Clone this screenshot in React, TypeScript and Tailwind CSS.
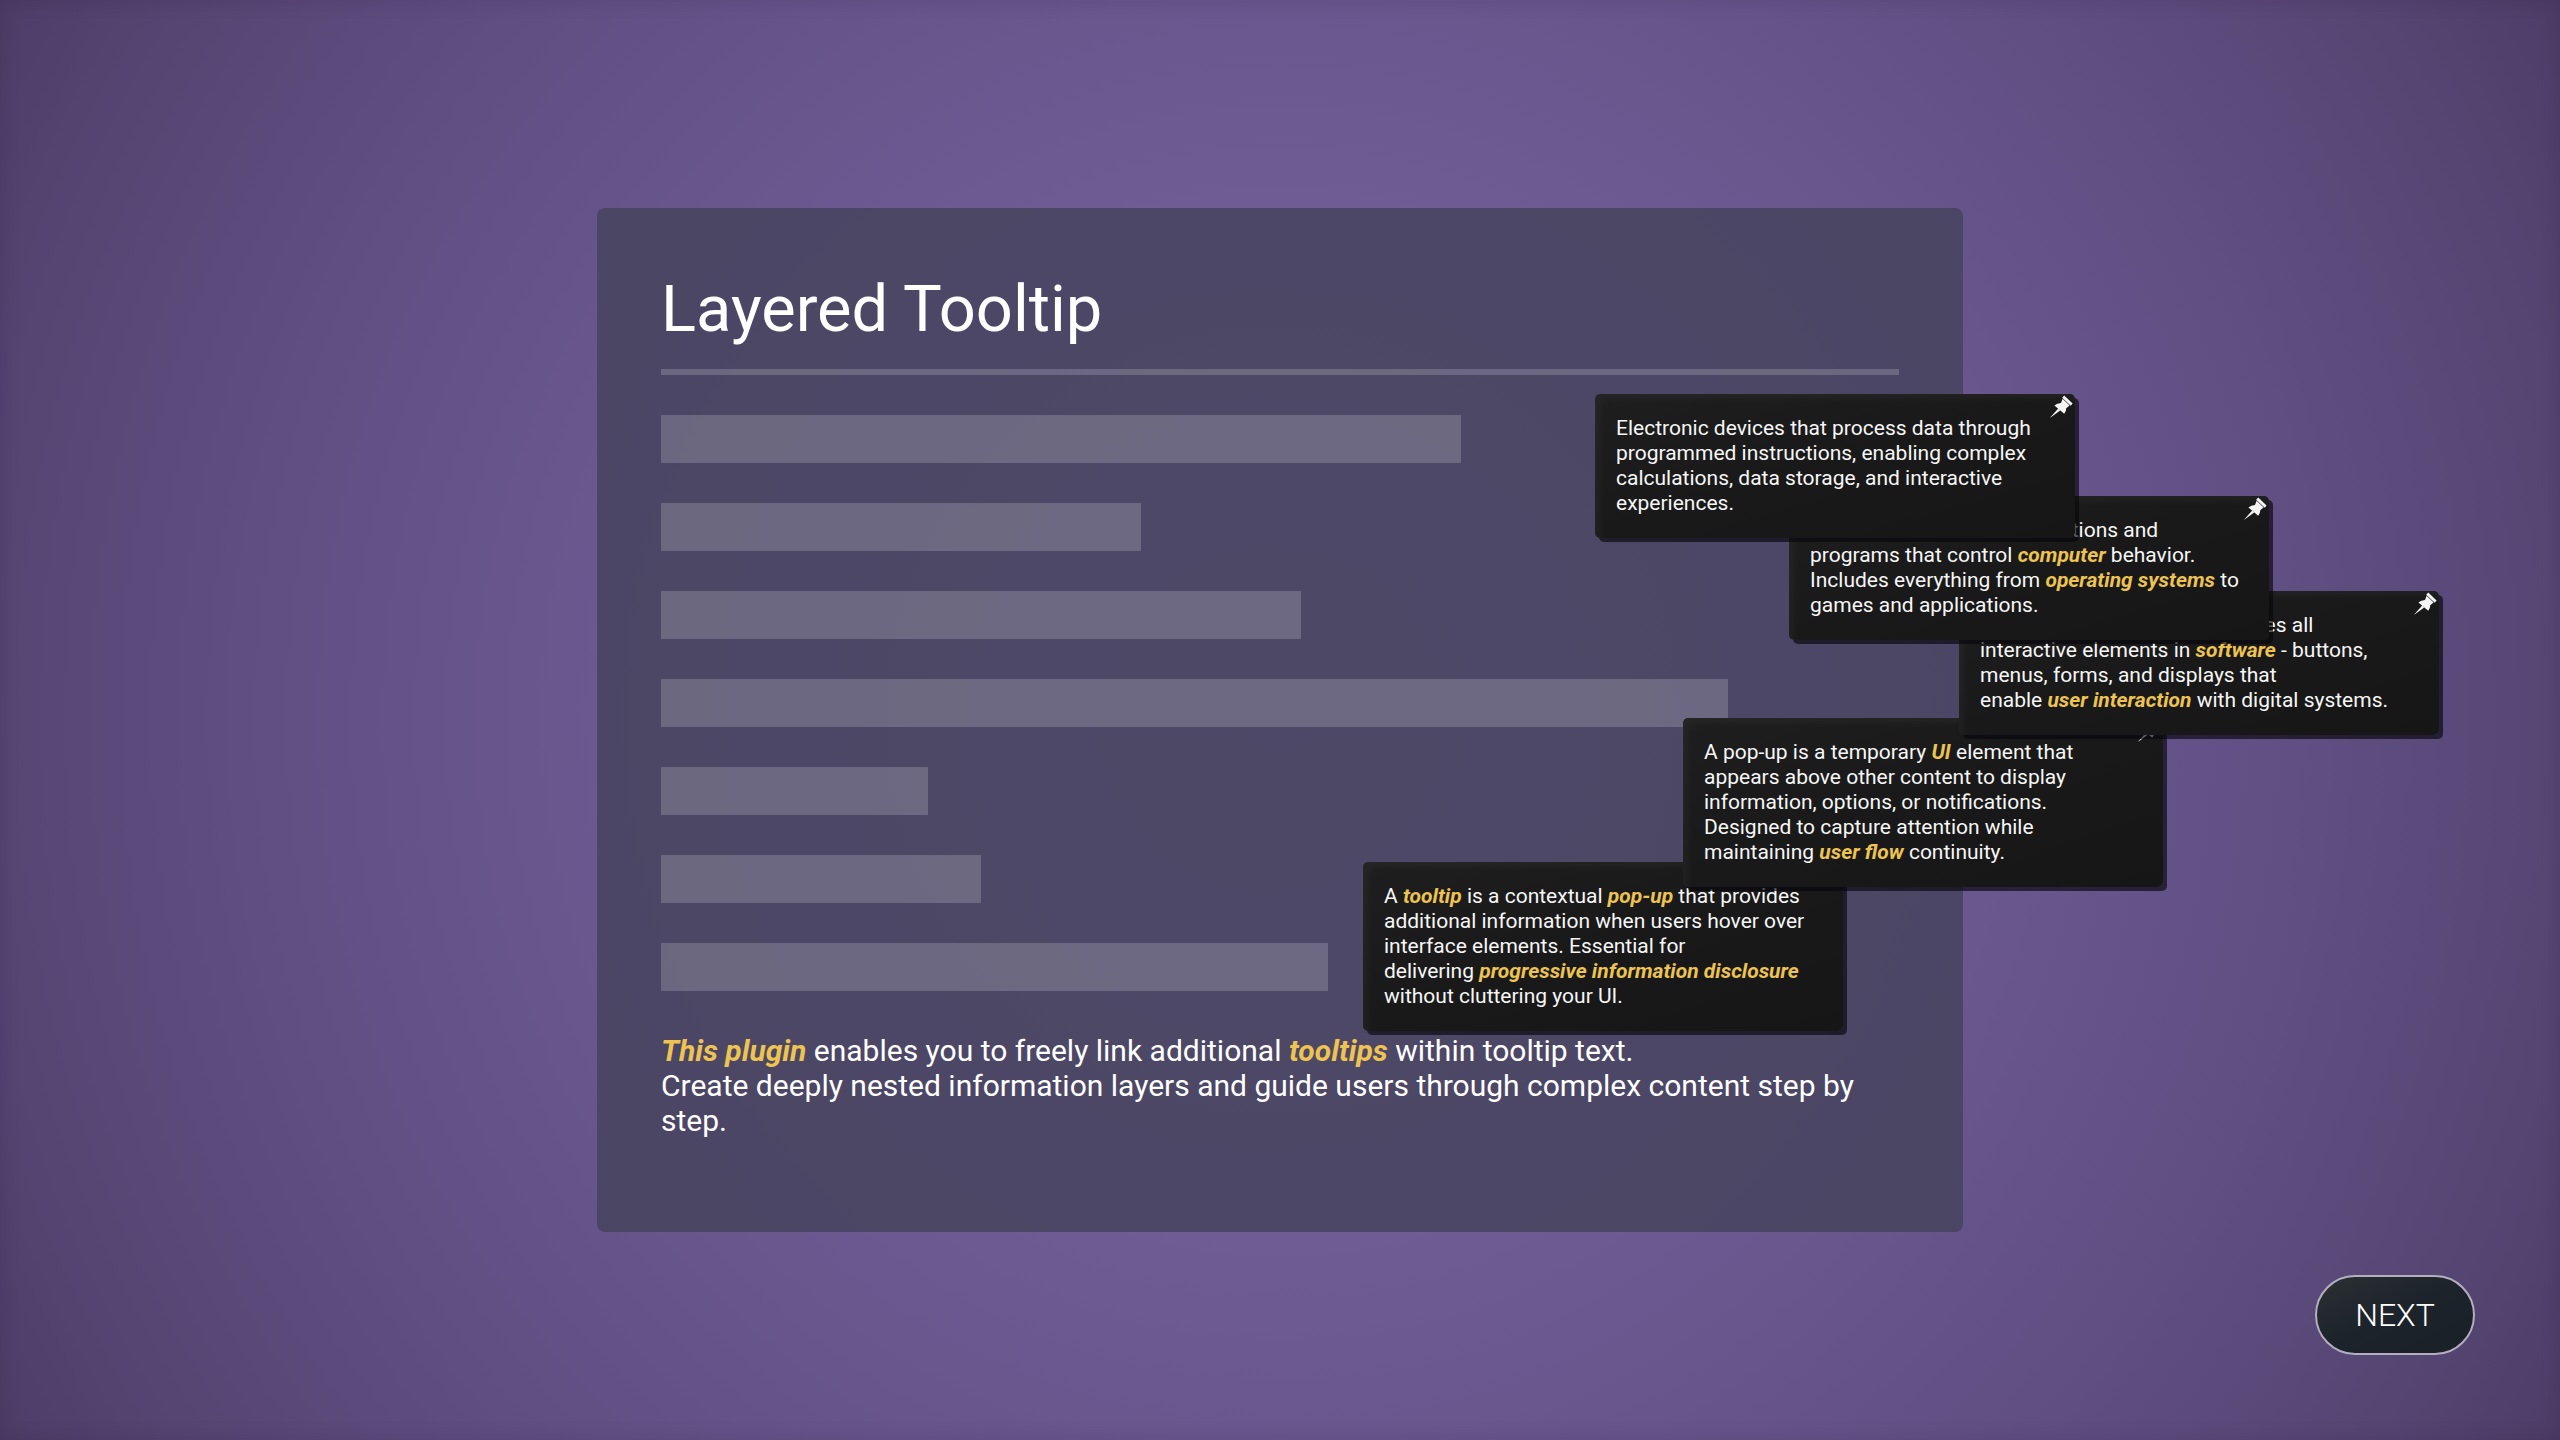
import type { ReactNode } from "react";

const Term = ({ children }: { children: ReactNode }) => (
  <a href="#" className="font-bold italic text-[#edc351]">
    {children}
  </a>
);

const PinIcon = () => (
  <svg viewBox="0 0 23 23" className="size-[23px]" fill="#f4f4f4" aria-hidden="true">
    <path d="M14.2 0.6 22.6 8.6 20.8 10.8 12.2 2.8Z" />
    <path d="M12.6 3.8 19.6 10.4 16.2 13.2Q16.4 16.2 14.2 18.8L4.4 10.4Q7 8.2 11 8Z" />
    <path d="M8.2 13.6 10.2 15.4 0.6 22.6 0.2 22.4Z" />
  </svg>
);

function Tooltip({ place, children }: { place: string; children: ReactNode }) {
  return (
    <aside
      className={`absolute w-[480px] rounded-[5px] bg-linear-to-br from-[#1e1e1e] via-[#191919] to-[#161616] px-[21px] py-[22px] text-[21px] leading-[25px] text-[#f6f6f6] shadow-[4px_4px_0_rgba(8,6,14,0.66),inset_5px_5px_8px_rgba(255,255,255,0.04)] ${place}`}
    >
      <button type="button" aria-label="Pin tooltip" className="absolute top-px right-[2px]">
        <PinIcon />
      </button>
      <p className="whitespace-nowrap">{children}</p>
    </aside>
  );
}

const bars = ["w-[800px]", "w-[480px]", "w-[640px]", "w-[1067px]", "w-[267px]", "w-[320px]", "w-[667px]"];

export default function App() {
  return (
    <div className="relative flex min-h-screen items-center justify-center bg-[radial-gradient(circle_at_center,#7a629e_0%,#705c95_35%,#645389_60%,#594979_82%,#4c3e67_100%)] font-[Roboto,sans-serif] text-white shadow-[inset_0_0_20px_rgba(40,10,50,0.15)]">
      <main className="relative w-full max-w-[1366px] rounded-lg bg-[#43425a]/80 px-16 pt-16 pb-[94px]">
        <h1 className="text-[65px] leading-[75px]">Layered Tooltip</h1>
        <hr className="mt-[22px] h-[6px] border-0 bg-white/18" />
        <div className="mt-10 flex flex-col gap-10">
          {bars.map((width) => (
            <div key={width} className={`h-12 max-w-full bg-white/18 ${width}`} />
          ))}
        </div>
        <p className="mt-[42px] text-[30px] leading-[35px]">
          <Term>This plugin</Term> enables you to freely link additional <Term>tooltips</Term> within tooltip text.
          <br />
          Create deeply nested information layers and guide users through complex content step by step.
        </p>

        <Tooltip place="left-[766px] top-[654px]">
          A <Term>tooltip</Term> is a contextual <Term>pop-up</Term> that provides
          <br />
          additional information when users hover over
          <br />
          interface elements. Essential for
          <br />
          delivering <Term>progressive information disclosure</Term>
          <br />
          without cluttering your UI.
        </Tooltip>
        <Tooltip place="left-[1086px] top-[510px]">
          A pop-up is a temporary <Term>UI</Term> element that
          <br />
          appears above other content to display
          <br />
          information, options, or notifications.
          <br />
          Designed to capture attention while
          <br />
          maintaining <Term>user flow</Term> continuity.
        </Tooltip>
        <Tooltip place="left-[1362px] top-[383px]">
          User Interface (UI) encompasses all
          <br />
          interactive elements in <Term>software</Term> - buttons,
          <br />
          menus, forms, and displays that
          <br />
          enable <Term>user interaction</Term> with digital systems.
        </Tooltip>
        <Tooltip place="left-[1192px] top-[288px]">
          Software is a core of instructions and
          <br />
          programs that control <Term>computer</Term> behavior.
          <br />
          Includes everything from <Term>operating systems</Term> to
          <br />
          games and applications.
        </Tooltip>
        <Tooltip place="left-[998px] top-[186px]">
          Electronic devices that process data through
          <br />
          programmed instructions, enabling complex
          <br />
          calculations, data storage, and interactive
          <br />
          experiences.
        </Tooltip>
      </main>

      <button
        type="button"
        className="absolute right-[85px] bottom-[85px] h-20 w-40 rounded-full border-2 border-[#b5aebf] bg-linear-to-br from-[#2b3033] via-[#1c232a] to-[#192026] text-[32px] font-light"
      >
        NEXT
      </button>
    </div>
  );
}
